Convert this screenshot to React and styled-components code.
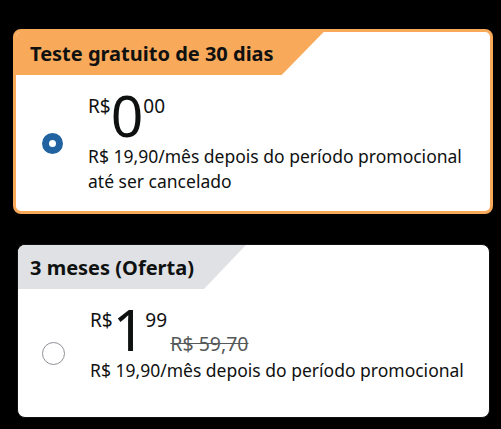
import React from "react";
import styled, { createGlobalStyle } from "styled-components";

const Global = createGlobalStyle`
  html, body { margin: 0; padding: 0; background: #000; }
  body { font-family: "Noto Sans", "Open Sans", sans-serif; color: #0f1111; }
`;

const Page = styled.div`
  width: 501px;
  height: 429px;
  box-sizing: border-box;
  padding: 29px 8px 0 13px;
  display: flex;
  flex-direction: column;
  gap: 30px;
  background: #000;
`;

const Card = styled.div`
  box-sizing: border-box;
  background: #fff;
  border-radius: 8px;
  overflow: hidden;
  width: ${(p) => (p.$selected ? 480 : 473)}px;
  margin-left: ${(p) => (p.$selected ? 0 : 4)}px;
  border: ${(p) => (p.$selected ? "3px solid #f9a95a" : "1px solid #111")};
`;

const Tag = styled.div`
  display: inline-flex;
  align-items: center;
  height: ${(p) => p.$h}px;
  padding: 0 ${(p) => p.$pr}px 0 ${(p) => p.$pl}px;
  background: ${(p) => p.$bg};
  clip-path: polygon(0 0, 100% 0, calc(100% - 42px) 100%, 0 100%);
  font-size: 20px;
  font-weight: 700;
  color: #0f1111;
`;

const Body = styled.div`
  display: flex;
  align-items: center;
  gap: 25px;
  min-height: 128px;
  box-sizing: border-box;
  padding: 0 0 0 ${(p) => p.$pl}px;
`;

const Radio = styled.span`
  width: ${(p) => (p.$checked ? 21 : 23)}px;
  height: ${(p) => (p.$checked ? 21 : 23)}px;
  box-sizing: border-box;
  border-radius: 50%;
  flex: none;
  background: #fff;
  border: ${(p) => (p.$checked ? "7px solid #2162a1" : "1.5px solid #8d9096")};
`;

const Content = styled.div`
  align-self: flex-start;
  padding-top: 12px;
  padding-bottom: 17px;
`;

const PriceRow = styled.div`
  display: flex;
  align-items: flex-start;
  line-height: 1;
`;

const Sup = styled.span`
  font-size: 19px;
  line-height: 19px;
  margin-top: 10px;
  margin-left: ${(p) => p.$ml || 0}px;
`;

const Whole = styled.span`
  font-size: 57px;
  line-height: 57px;
`;

const Cents = styled.div`
  display: flex;
  flex-direction: column;
  align-items: flex-start;
`;

const OldPrice = styled.span`
  font-size: 19.5px;
  line-height: 19.5px;
  color: #565959;
  text-decoration: line-through;
  margin-top: 4px;
  margin-left: 25px;
`;

const Desc = styled.div`
  font-size: 17.5px;
  line-height: 25px;
`;

export default function App() {
  return (
    <>
      <Global />
      <Page>
        <Card $selected>
          <Tag $bg="#f9a95a" $h={43} $pl={14} $pr={50}>
            Teste gratuito de 30 dias
          </Tag>
          <Body $pl={26}>
            <Radio $checked />
            <Content>
              <PriceRow>
                <Sup>R$</Sup>
                <Whole>0</Whole>
                <Sup>00</Sup>
              </PriceRow>
              <Desc>
                R$ 19,90/mês depois do período promocional
                <br />
                até ser cancelado
              </Desc>
            </Content>
          </Body>
        </Card>
        <Card>
          <Tag $bg="#dfe1e4" $h={44} $pl={12} $pr={52}>
            3 meses (Oferta)
          </Tag>
          <Body $pl={24}>
            <Radio />
            <Content>
              <PriceRow>
                <Sup>R$</Sup>
                <Whole>1</Whole>
                <Cents>
                  <Sup>99</Sup>
                  <OldPrice>R$ 59,70</OldPrice>
                </Cents>
              </PriceRow>
              <Desc>R$ 19,90/mês depois do período promocional</Desc>
            </Content>
          </Body>
        </Card>
      </Page>
    </>
  );
}
